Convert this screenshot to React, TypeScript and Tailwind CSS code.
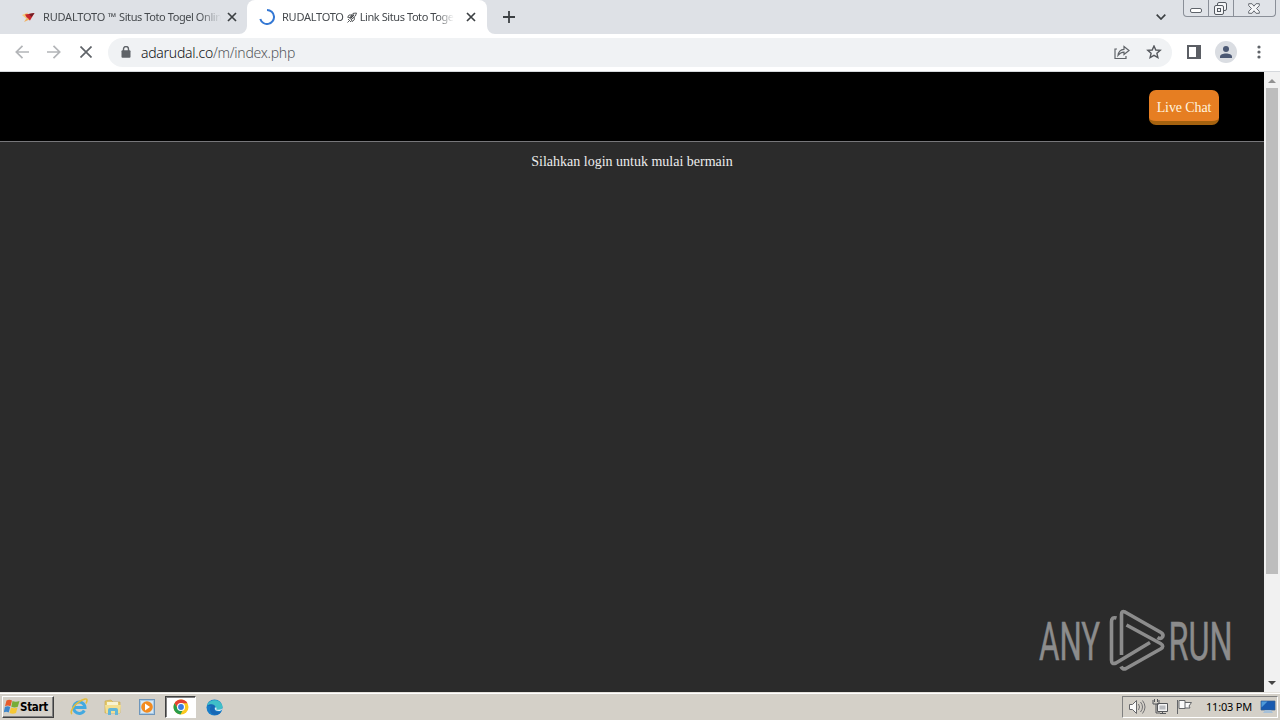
import React from "react";

const TAHOMA = "font-['Noto_Sans','DejaVu_Sans',sans-serif]";

function CloseIcon({ className }: { className: string }) {
  return (
    <svg className={className} viewBox="0 0 10 10" fill="none" stroke="#3c4043" strokeWidth="1.7">
      <path d="M1 1l8 8M9 1L1 9" />
    </svg>
  );
}

function TabStrip() {
  return (
    <div className="flex h-[34px] w-full shrink-0 bg-[#dee1e6]">
      <div className="flex h-full w-[247px] shrink-0 items-center pl-[21px]">
        <svg className="h-[14px] w-[16px] shrink-0" viewBox="0 0 16 14">
          <path d="M1 5l6-2.500-2 6z" fill="#f6c878" />
          <path d="M4 4.500L13.500 3 9 10.500 6.500 9z" fill="#c8252b" />
          <path d="M8 4l5.500-1-3 4z" fill="#6b1f25" />
          <path d="M3 12l3-4.500 2.500 2z" fill="#f2b060" />
        </svg>
        <div className="ml-[6px] flex w-[178px] whitespace-nowrap [mask-image:linear-gradient(to_right,black_88%,transparent)]">
          <span className={`${TAHOMA} -mt-px text-[11px] leading-4 tracking-[-0.2px] text-[#45494d]`}>RUDALTOTO ™</span>
          <span className={`${TAHOMA} -mt-px ml-[3px] text-[11px] leading-4 tracking-[-0.42px] text-[#45494d]`}>Situs Toto Togel Onlin</span>
        </div>
        <CloseIcon className="ml-[6px] h-[10px] w-[10px] shrink-0" />
      </div>
      <div className="relative flex h-full w-[240px] shrink-0 items-center rounded-t-lg bg-white pl-[12px]">
        <svg className="absolute bottom-0 -left-2 h-2 w-2" viewBox="0 0 8 8"><path d="M8 0v8H0a8 8 0 008-8z" fill="#fff" /></svg>
        <svg className="absolute -right-2 bottom-0 h-2 w-2" viewBox="0 0 8 8"><path d="M0 0v8h8a8 8 0 01-8-8z" fill="#fff" /></svg>
        <svg className="h-4 w-4 shrink-0" viewBox="0 0 16 16" fill="none" stroke="#3478d4" strokeWidth="2">
          <path d="M8 1a7 7 0 11-6.700 9" />
        </svg>
        <div className="ml-[7px] flex w-[172px] items-center whitespace-nowrap [mask-image:linear-gradient(to_right,black_90%,transparent)]">
          <span className={`${TAHOMA} text-[11px] leading-4 tracking-[-0.25px] text-[#45494d]`}>RUDALTOTO</span>
          <svg className="mr-[3px] ml-[3px] h-[11px] w-[10px] shrink-0" viewBox="0 0 10 11" fill="none" stroke="#303336" strokeWidth=".8">
            <path d="M9.500 1L6 1.400 2.600 6l1.600 1.600L8.400 4zM5 3H2L.7 5.300l2 .2M7.300 5.200v2.600L5 9.600 4.400 7.500M.5 10.500L3 8M1 8l1-1M3 10l1-1" />
            <path d="M3.500 6.200L7 2.600" strokeWidth="1.300" />
          </svg>
          <span className={`${TAHOMA} text-[11px] leading-4 tracking-[-0.42px] text-[#45494d]`}>Link Situs Toto Togel</span>
        </div>
        <CloseIcon className="ml-[12px] h-[10px] w-[10px] shrink-0" />
      </div>
      <svg className="mt-[11px] ml-[16px] h-3 w-3" viewBox="0 0 12 12" stroke="#3c4043" strokeWidth="1.800"><path d="M6 0v12M0 6h12" /></svg>
      <div className="flex-1" />
      <svg className="mt-[14px] mr-[17px] h-[6px] w-[10px]" viewBox="0 0 10 6" fill="none" stroke="#3c4043" strokeWidth="1.700"><path d="M.7.7L5 5 9.300.7" /></svg>
      <div className="mr-[4px] flex h-[17px] w-[93px] rounded-b-[4px] border border-t-0 border-[#8a8f98] bg-[#e0e3e8]">
        <div className="flex w-[25px] items-end justify-center border-r border-[#8a8f98] pb-[3px]">
          <div className="h-[5px] w-[12px] rounded-[2px] border border-[#5f646b] bg-white" />
        </div>
        <div className="flex w-[25px] justify-center border-r border-[#8a8f98] pt-[2px]">
          <svg className="-ml-px h-[13px] w-[13px]" viewBox="0 0 13 13" fill="#f4f5f7" stroke="#555a61">
            <rect x="3.500" y=".5" width="9" height="8" rx="1.500" />
            <rect x=".5" y="3.500" width="9" height="9" rx="1.500" />
            <rect x="3.500" y="6.500" width="3" height="3" />
          </svg>
        </div>
        <div className="flex flex-1 justify-center pt-[3px]">
          <svg className="-ml-px h-[11px] w-[12px]" viewBox="0 0 12 11" fill="#f4f5f7" stroke="#676b72">
            <path d="M.7.7H4l2 2.500 2-2.500h3.300v2L8.500 5.500l2.800 2.800v2H8L6 7.800l-2 2.500H.7v-2l2.800-2.800L.7 2.700z" />
          </svg>
        </div>
      </div>
    </div>
  );
}

function Toolbar() {
  return (
    <div className="flex h-[38px] shrink-0 items-center border-b border-[#d5d8dc] bg-white pb-px">
      <svg className="ml-[15px] h-[14px] w-[14px]" viewBox="0 0 14 14" fill="none" stroke="#b3b5b8" strokeWidth="1.700"><path d="M14 7H1.500M7.500.8L1.300 7l6.200 6.200" /></svg>
      <svg className="ml-[18px] h-[14px] w-[14px]" viewBox="0 0 14 14" fill="none" stroke="#b3b5b8" strokeWidth="1.700"><path d="M0 7h12.500M6.500.8L12.700 7l-6.200 6.200" /></svg>
      <svg className="ml-[19px] h-[12px] w-[12px]" viewBox="0 0 12 12" fill="none" stroke="#5f6368" strokeWidth="1.700"><path d="M.5.5l11 11M11.500.5l-11 11" /></svg>
      <div className="ml-[16px] flex h-[29px] w-[1064px] items-center rounded-full bg-[#f0f2f4] pl-[13px]">
        <svg className="h-[12px] w-[10px] shrink-0" viewBox="0 0 10 12"><path d="M2.500 5V3a2.500 2.500 0 015 0v2" fill="none" stroke="#5f6368" strokeWidth="1.400" /><rect x=".5" y="4.300" width="9" height="7.500" rx="1" fill="#5f6368" /></svg>
        <div className={`${TAHOMA} mt-px ml-[10px] text-[14px] leading-5 font-light tracking-[-0.26px] whitespace-nowrap text-[#55585d]`}>
          <span className="text-[#101214]">adarudal.co</span>/m/index.php
        </div>
        <div className="flex-1" />
        <svg className="h-[15px] w-[16px]" viewBox="0 0 16 15" fill="none" stroke="#5f6368" strokeWidth="1.200">
          <path d="M3 4H1v9.500h11v-2.500M4 10.500C4.500 6 7 4.500 10 4.300V1.500L15 5.500l-5 4V7.200C7.500 7.200 5.500 8.500 4 10.500z" />
        </svg>
        <svg className="mr-[10px] ml-[16px] h-[15px] w-[16px]" viewBox="0 0 16 15" fill="none" stroke="#55585d" strokeWidth="1.400"><path d="M8 1l1.800 4 4.400.4-3.300 2.900 1 4.300L8 10.400l-3.900 2.200 1-4.300-3.300-2.900L6.200 5z" /></svg>
      </div>
      <svg className="ml-[15px] h-[14px] w-[14px]" viewBox="0 0 14 14"><path d="M1 1h12v12H1z" fill="none" stroke="#5b5e64" strokeWidth="2" /><path d="M9 1h4v12H9z" fill="#5b5e64" /></svg>
      <div className="ml-[14px] flex h-[22px] w-[22px] items-center justify-center rounded-full bg-[#dadde2]">
        <svg className="h-[12px] w-[12px]" viewBox="0 0 12 12" fill="#4b5873"><circle cx="6" cy="3" r="3" /><path d="M0 12v-1.500C0 8.500 3 7.400 6 7.400s6 1.100 6 3.100V12z" /></svg>
      </div>
      <svg className="ml-[20px] h-[14px] w-[4px]" viewBox="0 0 4 14" fill="#5f6368"><circle cx="2" cy="2" r="1.600" /><circle cx="2" cy="7" r="1.600" /><circle cx="2" cy="12" r="1.600" /></svg>
    </div>
  );
}

function Watermark() {
  return (
    <svg className="absolute right-[29px] bottom-[20px] h-[64px] w-[197px]" viewBox="0 0 197 64">
      <g fill="#8c8c8c" stroke="#8c8c8c" strokeWidth=".5" fontFamily="Roboto, sans-serif" fontWeight="400" fontSize="53">
        <text x="1" y="51.500" textLength="61" lengthAdjust="spacingAndGlyphs">ANY</text>
        <text x="130.500" y="51.500" textLength="64" lengthAdjust="spacingAndGlyphs">RUN</text>
      </g>
      <g fill="none" stroke="#8c8c8c" strokeWidth="3.600" strokeLinejoin="round">
        <path d="M83.500 47V6q0-3.500 3.500-2l36 20.500q3 2 1.500 4.500-1.800 2.500-5 .5" />
        <path d="M78.500 10q-5-1.500-5 4v38q0 5 4.500 3l34-20.500" />
        <path d="M88.500 17l34 18.500q4.500 2.700 0 5.500L88 60.500q-3.500 1.500-5-2" />
      </g>
    </svg>
  );
}

function Page() {
  return (
    <div className="flex h-[620px] shrink-0">
      <div className="relative w-[1264px] bg-[#2b2b2b] font-['Liberation_Serif',serif]">
        <div className="flex h-[70px] justify-end border-b border-[#77777a] bg-black pt-[18px] pr-[45px]">
          <div className="h-[35px] w-[70px] rounded-[7px] border-b-4 border-[#a5620f] bg-[#e67e22] pt-px text-center text-[14px] leading-[34px] tracking-[-0.1px] whitespace-nowrap text-[#fff3df]">Live Chat</div>
        </div>
        <div className="pt-[11px] text-center text-[14px] leading-[18px] text-[#ededed]">Silahkan login untuk mulai bermain</div>
        <Watermark />
      </div>
      <div className="flex w-4 flex-col items-center bg-[#f1f1f1]">
        <svg className="h-4 w-4 shrink-0" viewBox="0 0 16 16"><path d="M4 11l4-4 4 4z" fill="#929292" /></svg>
        <div className="h-[486px] w-[12px] bg-[#bdbdbd]" />
        <div className="flex-1" />
        <svg className="h-4 w-4 shrink-0" viewBox="0 0 16 16"><path d="M4 5h8l-4 4z" fill="#454545" /></svg>
      </div>
    </div>
  );
}

function Taskbar() {
  return (
    <div className="flex h-[28px] shrink-0 items-center border-t border-[#e5e2dc] bg-[#d4d0c8] pt-px shadow-[inset_0_1px_0_#fff]">
      <div className="ml-[2px] flex h-[22px] w-[52px] items-center border border-t-white border-r-[#404040] border-b-[#404040] border-l-white pl-px shadow-[inset_-1px_-1px_0_#808080]">
        <svg className="h-[16px] w-[16px] shrink-0" viewBox="0 0 16 16">
          <path d="M2.500 1.500c2-1 3.500-1 5.500 0L6.500 7.200c-2-1-3.500-1-5.500 0z" fill="#e65b2b" />
          <path d="M8.500 2c2 1 4.500 1 7 0L13.800 7.700c-2 1-4.500 1-6.500 0z" fill="#77ad37" />
          <path d="M.9 8c2-1 3.500-1 5.300 0L4.700 13.500c-2-1-3.200-1-5 0z" fill="#3e86ca" />
          <path d="M7 8.500c2 1 4.500 1 6.500 0L12 14c-2 1-4.500 1-6.500 0z" fill="#f6c834" />
        </svg>
        <span className="font-['DejaVu_Sans_Condensed','DejaVu_Sans',sans-serif] text-[11.500px] leading-4 font-bold tracking-[-0.3px] text-black">Start</span>
      </div>
      <svg className="ml-[16px] h-[18px] w-[18px]" viewBox="0 0 18 18" fill="none">
        <path d="M14.300 12.500a5.700 5.700 0 11.700-3H5" stroke="#43a9e0" strokeWidth="3" />
        <path d="M2 16C-1 14 5 4 15 1c3-.5 2 2.500 1 4.500" stroke="#e4bd3c" strokeWidth="1.600" />
      </svg>
      <svg className="ml-[16px] h-[18px] w-[18px]" viewBox="0 0 18 18">
        <path d="M1 3l6-1 2 2h7v11H1z" fill="#e3c86a" stroke="#c9a849" strokeWidth=".6" />
        <path d="M3 4h11v3H3z" fill="#f7f3d2" /><path d="M1 7h16l-1 8H2z" fill="#f3df91" />
        <path d="M4 17v-5q0-2 2-2h6q2 0 2 2v5h-3v-4H7v4z" fill="#62b6d8" />
      </svg>
      <svg className="ml-[17px] h-[16px] w-[16px]" viewBox="0 0 16 16">
        <rect x=".5" y=".5" width="15" height="15" fill="#a8cae6" stroke="#6e96bb" />
        <rect x="2" y="2" width="12" height="12" fill="#d6e8f5" /><circle cx="8" cy="8" r="5.800" fill="#f28b20" /><path d="M6 4.500l5 3.500-5 3.500z" fill="#fff" />
      </svg>
      <div className="ml-[10px] flex h-[22px] w-[31px] items-center justify-center border border-t-[#404040] border-r-white border-b-white border-l-[#404040] bg-white shadow-[inset_1px_1px_0_#808080]">
        <svg className="h-4 w-4" viewBox="0 0 16 16">
          <circle cx="8" cy="8" r="7.500" fill="#fbc91f" />
          <path d="M1.500 4.250A7.500 7.500 0 0114.500 4.250H8L5 10z" fill="#e34234" />
          <path d="M1.500 4.250L5 10l5 .5-2.500 5A7.500 7.500 0 011.500 4.250z" fill="#289c4b" />
          <circle cx="8" cy="8" r="4" fill="#fff" /><circle cx="8" cy="8" r="2.900" fill="#3a7ce2" />
        </svg>
      </div>
      <svg className="ml-[10px] h-[17px] w-[17px]" viewBox="0 0 17 17">
        <circle cx="8.500" cy="8.500" r="8" fill="#187dc8" />
        <path d="M1 6.500C3 0 14-1 16.500 7c.5 4-4 5-6.500 3.500 1-4-4-6-9-4z" fill="#3fbfc8" />
        <path d="M1 6.500c5-3 9-.5 8 2.500-2 0-1 5 6 4-4 5-11 3-11-3 0-1 .5-2 1.500-2.500z" fill="#1767b5" />
        <path d="M8.800 8.500q-.5 4 5 3.500 2-.5 2.500-2.500-3 2-6 1 .5-1 0-2z" fill="#e0eef4" />
      </svg>
      <div className="flex-1" />
      <div className="mr-[2px] flex h-[22px] w-[156px] items-center border border-t-[#808080] border-r-white border-b-white border-l-[#808080] pl-[5px]">
        <svg className="h-4 w-[18px]" viewBox="0 0 18 16" fill="#fafafa" stroke="#66676a"><path d="M1.500 5.500h3l4-4v13l-4-4h-3z" /><path d="M10.500 5q2 3 0 6M12.500 3q4 5 0 10M14.500 1.500q5 6.500 0 13" fill="none" strokeWidth=".9" /></svg>
        <svg className="ml-[6px] h-4 w-4" viewBox="0 0 16 16" fill="#f4f4f4" stroke="#55575a"><path d="M5.500 4.500h10v8h-10zM8 14.500h6M10.500 12.500v2" /><path d="M1 1v4h6V1M2.500 0v3M5.500 0v3M4 5v9h4" fill="none" /><path d="M7.500 6.500h6v4h-6z" fill="#b9bbbf" stroke="none" /></svg>
        <svg className="ml-[8px] h-4 w-[17px]" viewBox="0 0 17 16" fill="#fafafa" stroke="#65676a"><path d="M1.500 1v14M3 1.500h6v8H3zM9 3.500h6.500l-2.500 3.500 1 2H9" /></svg>
        <span className={`${TAHOMA} ml-[13px] text-[11px] leading-4 tracking-[-0.2px] whitespace-nowrap text-black`}>11:03 PM</span>
        <svg className="mr-px ml-auto h-[14px] w-[16px] shrink-0" viewBox="0 0 16 14"><path d="M1 1h14v9H1z" fill="#185ab0" stroke="#355f91" strokeWidth=".7" /><path d="M1.500 1.500h6l-6 6z" fill="#4e9ad9" /><path d="M5 10h6l2 3H3z" fill="#a6c0d8" /></svg>
      </div>
    </div>
  );
}

export default function App() {
  return (
    <div className="flex h-[720px] w-[1280px] flex-col overflow-hidden">
      <TabStrip />
      <Toolbar />
      <Page />
      <Taskbar />
    </div>
  );
}
